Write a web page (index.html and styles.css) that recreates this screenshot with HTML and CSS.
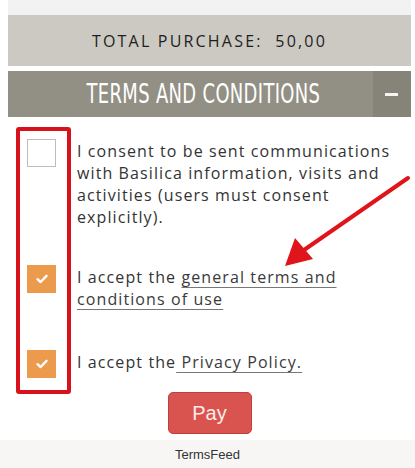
FILE: index.html
```html
<!DOCTYPE html>
<html lang="en">
<head>
<meta charset="UTF-8">
<meta name="viewport" content="width=device-width, initial-scale=1.0">
<title>Terms and Conditions</title>
<link rel="stylesheet" href="styles.css">
</head>
<body>

<div class="page">
  <div class="top-strip"></div>
  <div class="total">TOTAL PURCHASE:&nbsp; 50,00</div>

  <div class="terms-head">
    <div class="terms-title"><span>TERMS AND CONDITIONS</span></div>
    <div class="terms-toggle"><span class="minus"></span></div>
  </div>

  <div class="terms-body">
    <div class="row row-first">
      <span class="check"></span>
      <p class="label">I consent to be sent communications with Basilica information, visits and activities (users must consent explicitly).</p>
    </div>
    <div class="row row-second">
      <span class="check checked">
        <svg viewBox="0 0 12 10" width="12" height="10"><path d="M1.5 5.2 L4.6 8 L10.5 1.8" fill="none" stroke="#fff" stroke-width="2.4" stroke-linecap="round" stroke-linejoin="round"/></svg>
      </span>
      <p class="label">I accept the <a href="#">general terms and conditions of use</a></p>
    </div>
    <div class="row row-third">
      <span class="check checked">
        <svg viewBox="0 0 12 10" width="12" height="10"><path d="M1.5 5.2 L4.6 8 L10.5 1.8" fill="none" stroke="#fff" stroke-width="2.4" stroke-linecap="round" stroke-linejoin="round"/></svg>
      </span>
      <p class="label">I accept the<a href="#"> Privacy Policy.</a></p>
    </div>

    <div class="actions">
      <button class="pay">Pay</button>
    </div>

    <!-- annotation overlay -->
    <div class="highlight"></div>
    <svg class="arrow" width="140" height="100" viewBox="0 0 140 100">
      <line x1="134" y1="8" x2="30" y2="80" stroke="#e0141b" stroke-width="4" stroke-linecap="round"/>
      <polygon points="11,96 21,68 39,89" fill="#e0141b"/>
    </svg>
  </div>
</div>

<div class="footer">TermsFeed</div>

</body>
</html>
```

FILE: styles.css
```css
body {
  margin: 0;
  background: #fff;
  font-family: "Open Sans", "DejaVu Sans", sans-serif;
  color: #333;
}
.page {
  margin: 0 4px 0 8px;
}
.top-strip {
  height: 15px;
  background: #f2f2f2;
}
.total {
  height: 51px;
  background: #cbc9c1;
  display: flex;
  align-items: center;
  justify-content: center;
  font-size: 16px;
  letter-spacing: 2.2px;
  color: #1e1e1e;
  white-space: pre;
}
.terms-head {
  margin-top: 5px;
  height: 46px;
  display: flex;
  background: #929084;
}
.terms-title {
  flex: 1;
  display: flex;
  align-items: center;
  justify-content: center;
  padding-left: 26px;
  font-family: "DejaVu Sans", sans-serif;
  font-size: 26px;
  letter-spacing: 0.5px;
  color: #fff;
}
.terms-title span {
  display: inline-block;
  transform: scaleX(0.69);
  white-space: nowrap;
}
.terms-toggle {
  width: 44px;
  background: #868478;
  display: flex;
  align-items: center;
  justify-content: center;
}
.minus {
  width: 13px;
  height: 3px;
  background: #f4f4f0;
}
.terms-body {
  position: relative;
  height: 317px;
}
.row {
  display: flex;
  align-items: flex-start;
}
.row-first {
  padding-top: 22px;
}
.row-second {
  padding-top: 37px;
}
.row-third {
  padding-top: 40px;
}
.check {
  flex: none;
  width: 29px;
  height: 28px;
  margin-left: 19px;
  box-sizing: border-box;
  border: 1px solid #bdbdbd;
  background: #fff;
  display: flex;
  align-items: center;
  justify-content: center;
}
.check.checked {
  border: none;
  background: #ec9a4b;
}
.label {
  width: 318px;
  margin: 0 0 0 21px;
  padding-top: 1px;
  font-size: 16px;
  line-height: 22px;
  letter-spacing: 1.1px;
  color: #333;
}
.label a {
  color: #3a3a3a;
  text-decoration: underline;
  text-decoration-color: #777;
  text-underline-offset: 4px;
}
.actions {
  display: flex;
  justify-content: center;
  padding-top: 14px;
}
.pay {
  width: 84px;
  height: 42px;
  background: #d9534f;
  border: 1px solid #c0413c;
  border-radius: 5px;
  color: #fcebe8;
  font-family: "Liberation Sans", Arial, sans-serif;
  font-size: 20px;
}
.highlight {
  position: absolute;
  left: 8px;
  top: 10px;
  width: 47px;
  height: 259px;
  border: 4px solid #d8121a;
  border-radius: 3px;
}
.arrow {
  position: absolute;
  left: 266px;
  top: 53px;
}
.footer {
  margin-top: 6px;
  height: 28px;
  background: #f7f6f4;
  display: flex;
  align-items: center;
  justify-content: center;
  font-family: "Liberation Sans", Arial, sans-serif;
  font-size: 13px;
  color: #333;
}
```
